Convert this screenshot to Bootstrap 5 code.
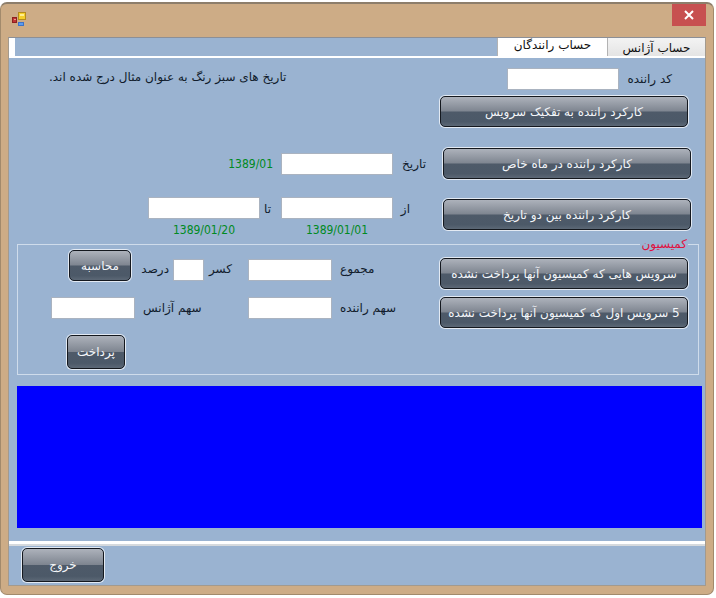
<!DOCTYPE html>
<html lang="fa" dir="rtl">
<head>
<meta charset="utf-8">
<meta name="viewport" content="width=device-width, initial-scale=1">
<title>حساب رانندگان</title>
<link rel="stylesheet" href="https://cdn.jsdelivr.net/npm/bootstrap@5.3.0/dist/css/bootstrap.min.css">
<style>
body{font:12px/16px "DejaVu Sans",sans-serif;color:#111c2c;background:#fff;padding:2px 2px 3px 0}
.app-window{min-height:calc(100vh - 5px);background:#cdac86;border:1px solid #a28a6c;border-top:2px solid #8d7e6b;border-radius:7px;padding:0 7px 8px}
.title-bar{height:33px;padding-left:4px}
.close-btn{width:34px;height:22px;background:#c75050;color:#fff;border:0}
.client-area{background:#9ab3d1;border:1px solid #a39a8e;border-top-color:#8c8f96}
.tab-strip{height:20px;border-bottom:2px solid #fff}
.tab-strip .tab-btn{border:0;border-left:1px solid #b3b3b3;background:linear-gradient(#f3f3f3,#e4e4e4);color:#111;width:98px;padding:2px 0 0;line-height:14px}
.tab-strip .tab-btn.active{background:#fff;width:110px;padding:0 0 4px}
.strip-end{width:6px;background:#fff}
.glossy{height:31px;padding:0 4px;color:#f4f6f9;white-space:nowrap;border:1px solid #14181e;border-radius:5px;
 background:linear-gradient(#adb2bb 0,#7e8590 49%,#4e5a69 51%,#4c5968 85%,#5c6876 100%);box-shadow:0 0 0 1px #e3eaf3}
.glossy:hover{filter:brightness(1.1)}
.wide{width:248px}
.tall{height:34px}
.calc-btn{width:62px}
.pay-btn{width:58px}
.exit-btn{width:82px;margin:2px 0 3px 13px}
.field{height:22px;border:1px solid #aab3c0;background:#fff;padding:0 4px;border-radius:0;font-size:12px}
.w-date{width:112px}
.w-sum{width:84px}
.w-pct{width:31px}
.sample{color:#008a22;direction:ltr;font-family:"DejaVu Sans Condensed","DejaVu Sans",sans-serif}
.under{margin-top:3px}
.row-code{padding:10px 33px 0 40px}
.row-first{padding:6px 17px 0 0}
.row-month{padding:21px 14px 0 0}
.row-range{padding:18px 14px 0 0}
.row-range .glossy{margin-top:2px}
.cap{width:33px;margin-right:17px}
.cap-to{width:21px;padding:4px 10px 0 0}
.commission{border:1px solid #cfdceb;margin:0 6px 0 8px;padding:0 10px 5px 0}
.commission legend{float:none;width:auto;margin:0;padding:0 1px;font-size:12px;line-height:12px;color:#e0103f}
.cap-a{width:60px;margin:0 40px 0 8px;text-align:left;white-space:nowrap}
.cap-b{width:61px;margin:0 44px 0 8px;text-align:left;white-space:nowrap}
.cap-c{width:44px;padding-right:16px}
.cap-d{width:42px;padding-right:4px}
.result-grid{background:#00f;min-height:60px;margin:11px 3px 13px 8px}
.foot-line{height:5px;background:linear-gradient(#fff 60%,#d5d9dd 60%)}
</style>
</head>
<body>
<main class="app-window d-flex flex-column">
  <header class="title-bar d-flex justify-content-between align-items-start">
    <button type="button" class="close-btn d-flex align-items-center justify-content-center" aria-label="بستن">
      <svg width="10" height="10" viewBox="0 0 10 10"><path d="M1 1l8 8M9 1l-8 8" stroke="#fff" stroke-width="2"/></svg>
    </button>
    <svg class="mt-2" width="16" height="16" viewBox="0 0 16 16" aria-hidden="true">
      <rect x="6.500" y=".5" width="7" height="7" fill="#f5cf2c" stroke="#b48c1b"/><path d="M8 2h4v2h-4z" fill="#ffef92"/>
      <rect x=".5" y="5.500" width="4" height="5" fill="#c03434" stroke="#8e2020"/><path d="M2 7h2v1h-2z" fill="#ee9a8a"/>
      <rect x="6.500" y="10.500" width="5" height="3" fill="#5b9bf0" stroke="#3d73c6"/>
    </svg>
  </header>

  <section class="client-area flex-grow-1 d-flex flex-column">
    <div class="tab-strip d-flex" role="tablist">
      <button type="button" class="tab-btn" role="tab" aria-selected="false">حساب آژانس</button>
      <button type="button" class="tab-btn active" role="tab" aria-selected="true">حساب رانندگان</button>
      <span class="strip-end me-auto"></span>
    </div>

    <div class="row-code d-flex align-items-center">
      <label for="code">کد راننده</label>
      <input id="code" class="field w-date me-2">
      <span class="me-auto pb-1">تاریخ های سبز رنگ به عنوان مثال درج شده اند.</span>
    </div>
    <div class="row-first d-flex">
      <button type="button" class="glossy wide">کارکرد راننده به تفکیک سرویس</button>
    </div>
    <div class="row-month d-flex align-items-center">
      <button type="button" class="glossy wide">کارکرد راننده در ماه خاص</button>
      <label for="month" class="cap">تاریخ</label>
      <input id="month" class="field w-date">
      <span class="sample me-2">1389/01</span>
    </div>
    <div class="row-range d-flex align-items-start">
      <button type="button" class="glossy wide">کارکرد راننده بین دو تاریخ</button>
      <label for="from" class="cap pt-1 pe-3">از</label>
      <div class="d-flex flex-column align-items-center">
        <input id="from" class="field w-date"><span class="sample under">1389/01/01</span>
      </div>
      <label for="to" class="cap-to">تا</label>
      <div class="d-flex flex-column align-items-center">
        <input id="to" class="field w-date"><span class="sample under">1389/01/20</span>
      </div>
    </div>

    <fieldset class="commission">
      <legend>کمیسیون</legend>
      <div class="d-flex align-items-start">
        <div class="d-flex flex-column gap-2 pt-2">
          <button type="button" class="glossy wide">سرویس هایی که کمیسیون آنها پرداخت نشده</button>
          <button type="button" class="glossy wide">5 سرویس اول که کمیسیون آنها پرداخت نشده</button>
        </div>
        <div class="d-flex flex-column">
          <div class="d-flex align-items-end">
            <label for="total" class="cap-a pb-1">مجموع</label>
            <input id="total" class="field w-sum">
            <label for="pct" class="cap-c pb-1">کسر</label>
            <input id="pct" class="field w-pct">
            <span class="cap-d pb-1">درصد</span>
            <button type="button" class="glossy calc-btn">محاسبه</button>
          </div>
          <div class="d-flex align-items-center mt-3">
            <label for="driver" class="cap-a">سهم راننده</label>
            <input id="driver" class="field w-sum">
            <label for="agency" class="cap-b">سهم آژانس</label>
            <input id="agency" class="field w-sum">
          </div>
          <div class="d-flex justify-content-end mt-3 ps-3">
            <button type="button" class="glossy tall pay-btn">پرداخت</button>
          </div>
        </div>
      </div>
    </fieldset>

    <div class="result-grid flex-grow-1" role="region" aria-label="نتایج"></div>
    <div class="foot-line"></div>
    <footer class="d-flex justify-content-end">
      <button type="button" class="glossy tall exit-btn">خروج</button>
    </footer>
  </section>
</main>
<script src="https://cdn.jsdelivr.net/npm/bootstrap@5.3.0/dist/js/bootstrap.bundle.min.js"></script>
</body>
</html>
